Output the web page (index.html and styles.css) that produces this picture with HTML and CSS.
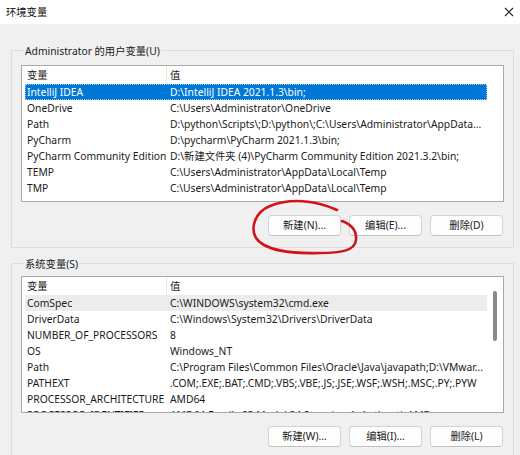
FILE: index.html
```html
<!DOCTYPE html>
<html lang="zh-CN">
<head>
<meta charset="utf-8">
<title>环境变量</title>
<link rel="stylesheet" href="styles.css">
</head>
<body>
<div class="window">
  <div class="titlebar">
    <span class="title">环境变量</span>
    <svg class="close" width="10" height="10" viewBox="0 0 10 10"><path d="M1 1L9 9M9 1L1 9" stroke="#222" stroke-width="1.1" fill="none"/></svg>
  </div>
  <div class="content">
    <div class="group group-user">
      <div class="legend">Administrator 的用户变量(U)</div>
      <div class="list list-user">
        <div class="rows">
          <div class="row head"><span class="c1">变量</span><span class="c2">值</span></div>
          <div class="row sel"><span class="c1">IntelliJ IDEA</span><span class="c2">D:\IntelliJ IDEA 2021.1.3\bin;</span></div>
          <div class="row"><span class="c1">OneDrive</span><span class="c2">C:\Users\Administrator\OneDrive</span></div>
          <div class="row"><span class="c1">Path</span><span class="c2">D:\python\Scripts\;D:\python\;C:\Users\Administrator\AppData...</span></div>
          <div class="row"><span class="c1">PyCharm</span><span class="c2">D:\pycharm\PyCharm 2021.1.3\bin;</span></div>
          <div class="row"><span class="c1">PyCharm Community Edition</span><span class="c2">D:\新建文件夹 (4)\PyCharm Community Edition 2021.3.2\bin;</span></div>
          <div class="row"><span class="c1">TEMP</span><span class="c2">C:\Users\Administrator\AppData\Local\Temp</span></div>
          <div class="row"><span class="c1">TMP</span><span class="c2">C:\Users\Administrator\AppData\Local\Temp</span></div>
        </div>
        <div class="sbar"></div>
      </div>
      <div class="buttons">
        <div class="btn">新建(N)...</div>
        <div class="btn">编辑(E)...</div>
        <div class="btn">删除(D)</div>
      </div>
    </div>

    <div class="group group-sys">
      <div class="legend">系统变量(S)</div>
      <div class="list list-sys">
        <div class="rows">
          <div class="row head"><span class="c1">变量</span><span class="c2">值</span></div>
          <div class="row hover"><span class="c1">ComSpec</span><span class="c2">C:\WINDOWS\system32\cmd.exe</span></div>
          <div class="row"><span class="c1">DriverData</span><span class="c2">C:\Windows\System32\Drivers\DriverData</span></div>
          <div class="row"><span class="c1">NUMBER_OF_PROCESSORS</span><span class="c2">8</span></div>
          <div class="row"><span class="c1">OS</span><span class="c2">Windows_NT</span></div>
          <div class="row"><span class="c1">Path</span><span class="c2">C:\Program Files\Common Files\Oracle\Java\javapath;D:\VMwar...</span></div>
          <div class="row"><span class="c1">PATHEXT</span><span class="c2">.COM;.EXE;.BAT;.CMD;.VBS;.VBE;.JS;.JSE;.WSF;.WSH;.MSC;.PY;.PYW</span></div>
          <div class="row"><span class="c1">PROCESSOR_ARCHITECTURE</span><span class="c2">AMD64</span></div>
          <div class="row"><span class="c1">PROCESSOR_IDENTIFIER</span><span class="c2">AMD64 Family 23 Model 24 Stepping 1, AuthenticAMD</span></div>
        </div>
        <div class="sbar"><div class="thumb"></div></div>
      </div>
      <div class="buttons">
        <div class="btn">新建(W)...</div>
        <div class="btn">编辑(I)...</div>
        <div class="btn">删除(L)</div>
      </div>
    </div>
  </div>
  <svg class="mark" width="520" height="455" viewBox="0 0 520 455">
    <path d="M337,210 C315,200 290,198 270,206 C255,212 250,228 256,238 C264,250 290,254 320,253 C340,253 355,251 356,240 C357,230 350,224 342,221" fill="none" stroke="#d3121b" stroke-width="2.6" stroke-linecap="round"/>
  </svg>
</div>
</body>
</html>
```

FILE: styles.css
```css
html, body {
  margin: 0;
  padding: 0;
}
body {
  background: #f0f0f0;
  font-family: "Noto Sans", "Noto Sans CJK SC", sans-serif;
  font-size: 10.3px;
  color: #1a1a1a;
  width: 520px;
  height: 455px;
  overflow: hidden;
}
.window {
  position: relative;
  width: 520px;
  height: 455px;
  overflow: hidden;
}
.titlebar {
  height: 24px;
  background: #ffffff;
  display: flex;
  align-items: center;
  justify-content: space-between;
  padding: 0 6px 0 6px;
  box-sizing: border-box;
}
.title {
  font-size: 10.3px;
  color: #111;
  line-height: 16px;
}
.close {
  margin-top: -1px;
}
.content {
  padding: 0 6px 0 11px;
}
.group {
  border: 1px solid #dcdcdc;
  padding: 0 9px 11px 9px;
}
.group-user {
  margin-top: 26px;
}
.group-sys {
  margin-top: 15px;
}
.legend {
  display: block;
  width: fit-content;
  margin-top: -8px;
  margin-left: 3px;
  padding: 0 1px;
  background: #f0f0f0;
  line-height: 16px;
  height: 16px;
}
.list {
  display: flex;
  height: 137px;
  box-sizing: border-box;
  border: 1px solid #a9a9a9;
  background: #ffffff;
  overflow: hidden;
}
.list-user {
  margin-top: 6px;
}
.list-sys {
  margin-top: 4px;
}
.rows {
  width: 462px;
  margin-left: 3px;
  flex: none;
}
.row {
  display: flex;
  height: 16px;
  line-height: 16px;
  white-space: nowrap;
}
.row.head {
  height: 18px;
  line-height: 18px;
}
.c1 {
  width: 139px;
  padding-left: 2px;
  flex: none;
  overflow: hidden;
}
.c2 {
  padding-left: 4px;
  overflow: hidden;
  flex: 1;
}
.head .c1 {
  border-right: 1px solid #e5e5e5;
}
.head .c2 {
  padding-left: 3px;
}
.row.sel {
  background: #0078d7;
  color: #ffffff;
  outline: 1px dotted #9cc6ee;
  outline-offset: -1px;
}
.row.hover {
  background: #ececec;
}
.sbar {
  flex: 1;
  padding-top: 14px;
  padding-left: 6px;
}
.thumb {
  width: 4px;
  height: 50px;
  background: #8a8a8a;
  border-radius: 2px;
}
.buttons {
  display: flex;
  justify-content: flex-end;
  gap: 8px;
  margin-top: 13px;
  margin-right: 1px;
}
.btn {
  width: 73px;
  height: 21px;
  box-sizing: border-box;
  border: 1px solid #d3d3d3;
  border-bottom-color: #c2c2c2;
  border-radius: 4px;
  background: #fdfdfd;
  text-align: center;
  line-height: 19px;
}
.mark {
  position: absolute;
  left: 0;
  top: 0;
  pointer-events: none;
}
```
